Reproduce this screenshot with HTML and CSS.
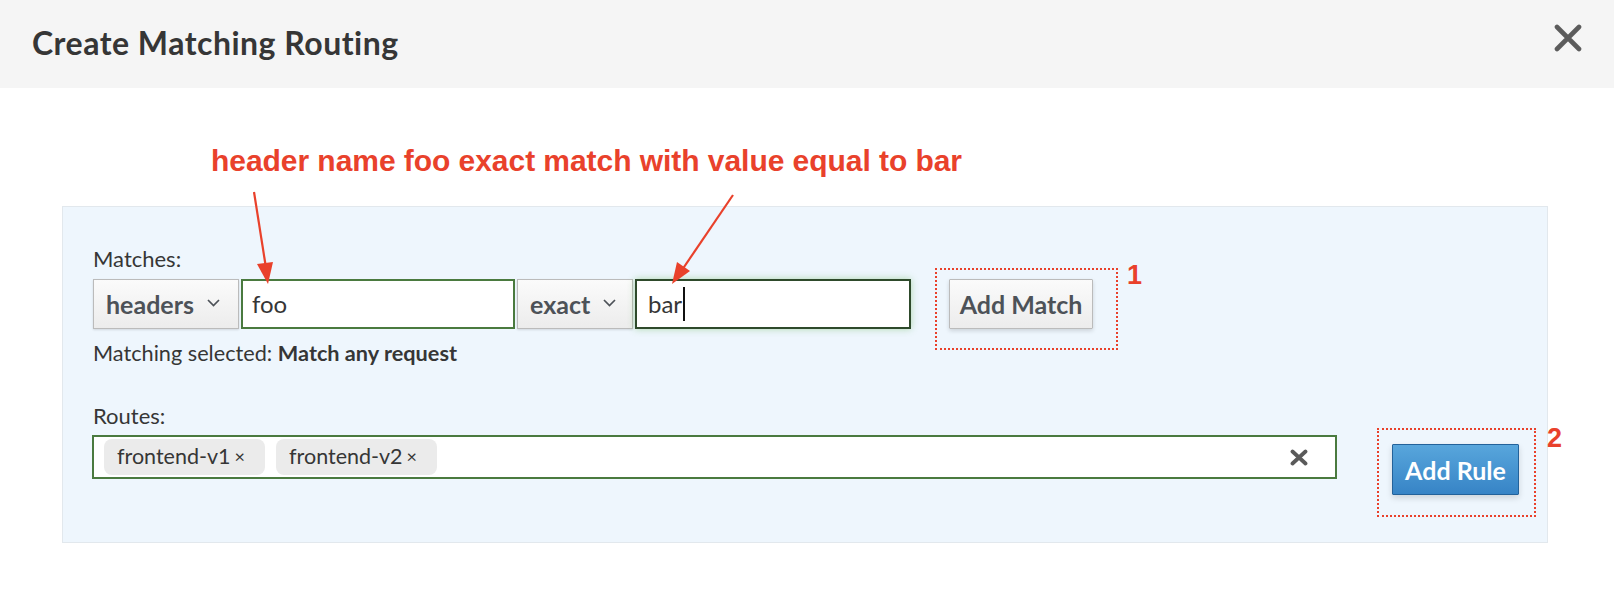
FILE: index.html
```html
<!DOCTYPE html>
<html lang="en">
<head>
<meta charset="utf-8">
<title>Create Matching Routing</title>
<link rel="stylesheet" href="styles.css">
</head>
<body>
<div class="modal">
  <header class="modal-header">
    <h1 class="modal-title">Create Matching Routing</h1>
    <button class="close-btn" aria-label="Close">
      <svg width="28" height="28" viewBox="0 0 28 28"><path d="M3 3 L25 25 M25 3 L3 25" stroke="#5c5c5c" stroke-width="4.6" stroke-linecap="round"/></svg>
    </button>
  </header>
  <div class="modal-body">
    <div class="annotation">header name foo exact match with value equal to bar</div>
    <div class="panel">
      <div class="field">
        <div class="label">Matches:</div>
        <div class="match-row">
          <div class="select select-headers"><span>headers</span><svg class="chev" width="13" height="8" viewBox="0 0 13 8"><polyline points="1,1 6.5,6.5 12,1" fill="none" stroke="#4d5258" stroke-width="1.7"/></svg></div>
          <div class="text-input input-foo">foo</div>
          <div class="select select-exact"><span>exact</span><svg class="chev" width="13" height="8" viewBox="0 0 13 8"><polyline points="1,1 6.5,6.5 12,1" fill="none" stroke="#4d5258" stroke-width="1.7"/></svg></div>
          <div class="text-input input-bar focused">bar<span class="caret"></span></div>
          <div class="callout callout-1">
            <button class="btn btn-default">Add Match</button>
            <span class="callout-num">1</span>
          </div>
        </div>
        <div class="hint">Matching selected: <b>Match any request</b></div>
      </div>
      <div class="routes-row">
        <div class="field routes-field">
          <div class="label">Routes:</div>
          <div class="tags-input">
            <span class="tag">frontend-v1 <span class="tag-x">×</span></span>
            <span class="tag">frontend-v2 <span class="tag-x">×</span></span>
            <svg class="clear-x" width="18" height="17" viewBox="0 0 18 17"><path d="M2.5 2.5 L15.5 14.5 M15.5 2.5 L2.5 14.5" stroke="#5a5a5a" stroke-width="3.8" stroke-linecap="round"/></svg>
          </div>
        </div>
        <div class="callout callout-2">
          <button class="btn btn-primary">Add Rule</button>
          <span class="callout-num">2</span>
        </div>
      </div>
    </div>
  </div>
  <svg class="arrows" width="1614" height="606" viewBox="0 0 1614 606">
    <line x1="254" y1="192" x2="266" y2="268" stroke="#e9412b" stroke-width="2.2"/>
    <polygon points="268,284 257,264 273,262" fill="#e9412b"/>
    <line x1="733" y1="195" x2="682" y2="270" stroke="#e9412b" stroke-width="2.2"/>
    <polygon points="672,284 677,262 690,271" fill="#e9412b"/>
  </svg>
</div>
</body>
</html>
```

FILE: styles.css
```css
* { box-sizing: border-box; }

html, body {
  margin: 0;
  padding: 0;
  background: #ffffff;
}

body {
  font-family: Lato, "Open Sans", sans-serif;
  color: #363636;
  width: 1614px;
  height: 606px;
  overflow: hidden;
}

.modal {
  position: relative;
  width: 1614px;
  height: 606px;
}

.modal-header {
  height: 88px;
  background: #f5f5f5;
  display: flex;
  align-items: flex-start;
  justify-content: space-between;
  padding: 0 32px;
}

.modal-title {
  margin: 24px 0 0 0;
  font-size: 32px;
  line-height: 38px;
  letter-spacing: 0.5px;
  font-weight: 700;
  color: #363636;
}

.close-btn {
  margin-top: 24px;
  width: 28px;
  height: 28px;
  padding: 0;
  border: 0;
  background: transparent;
  display: block;
}

.close-btn svg { display: block; }

.modal-body {
  padding: 57px 66px 0 62px;
}

.annotation {
  margin-left: 149px;
  font-family: "Liberation Sans", Arial, sans-serif;
  font-weight: 700;
  font-size: 30px;
  line-height: 32px;
  color: #e9412b;
  letter-spacing: -0.05px;
}

.panel {
  margin-top: 29px;
  background: #eef6fd;
  border: 1px solid #e2e8ed;
  height: 337px;
  padding: 39px 28px 0 30px;
}

.label {
  font-size: 22px;
  line-height: 26px;
  color: #363636;
}

.match-row {
  margin-top: 7px;
  display: flex;
  align-items: stretch;
  height: 50px;
  gap: 2px;
}

.select {
  display: flex;
  align-items: center;
  justify-content: space-between;
  padding: 0 18px 0 12px;
  background: linear-gradient(#fbfbfb, #ececec);
  border: 1px solid #bbbbbb;
  box-shadow: 0 1px 2px rgba(0, 0, 0, 0.12);
  font-size: 25px;
  font-weight: 700;
  color: #4d5258;
}

.select .chev { display: block; margin-bottom: 3px; }

.select-headers { width: 146px; }
.select-exact { width: 116px; padding-right: 16px; }

.text-input {
  display: flex;
  align-items: center;
  background: #ffffff;
  border: 2px solid #4a7a3f;
  padding: 0 10px 2px 9px;
  font-size: 24px;
  color: #363636;
}

.input-foo { width: 274px; }

.input-bar {
  width: 276px;
  border-color: #2e4a2b;
  box-shadow: 0 0 7px rgba(98, 180, 80, 0.45);
  padding-left: 11px;
}

.caret {
  display: inline-block;
  width: 2px;
  height: 34px;
  background: #111;
  margin-left: 1px;
  margin-top: 2px;
}

.callout {
  position: relative;
  display: flex;
}

.callout::before {
  content: "";
  position: absolute;
  border: 2px dotted #e9412b;
  pointer-events: none;
}

.callout-num {
  position: absolute;
  font-family: "Liberation Sans", Arial, sans-serif;
  font-weight: 700;
  font-size: 27px;
  line-height: 27px;
  color: #e9412b;
}

.callout-1 { margin-left: 36px; }
.callout-1::before { left: -14px; top: -11px; right: -25px; bottom: -21px; }
.callout-1 .callout-num { left: 178px; top: -17px; }

.btn {
  font-family: Lato, "Open Sans", sans-serif;
  font-size: 25px;
  font-weight: 700;
  border-radius: 1px;
  padding: 0;
  display: flex;
  align-items: center;
  justify-content: center;
}

.btn-default {
  width: 144px;
  height: 50px;
  background: linear-gradient(#fbfbfb, #ececec);
  border: 1px solid #bbbbbb;
  color: #4d5258;
  box-shadow: 0 2px 4px rgba(0, 0, 0, 0.14);
}

.hint {
  margin-top: 11px;
  font-size: 21.7px;
  line-height: 26px;
  color: #363636;
}

.hint b { font-weight: 700; }

.routes-row {
  margin-top: 37px;
  display: flex;
  align-items: flex-start;
  gap: 55px;
}

.routes-field { flex: 1; }

.tags-input {
  margin-top: 6px;
  height: 44px;
  background: #ffffff;
  border: 2px solid #4a7a3f;
  display: flex;
  align-items: center;
  gap: 11px;
  padding: 0 27px 0 10px;
  margin-left: -1px;
}

.tag {
  display: inline-flex;
  align-items: center;
  height: 36px;
  padding: 0 20px 2px 13px;
  background: #ebebeb;
  border-radius: 8px;
  font-size: 21.5px;
  color: #363636;
}

.tag-x {
  font-size: 18px;
  margin-left: 4px;
}

.clear-x {
  margin-left: auto;
  display: block;
}

.callout-2 { margin-top: 41px; }
.callout-2::before { left: -15px; top: -16px; right: -17px; bottom: -22px; }
.callout-2 .callout-num { left: 155px; top: -19px; }

.btn-primary {
  width: 127px;
  height: 51px;
  background: linear-gradient(#58a6dc, #3784c6);
  border: 1px solid #23629a;
  color: #ffffff;
  box-shadow: 0 3px 6px rgba(0, 0, 0, 0.14);
}

.arrows {
  position: absolute;
  left: 0;
  top: 0;
  pointer-events: none;
}
```
